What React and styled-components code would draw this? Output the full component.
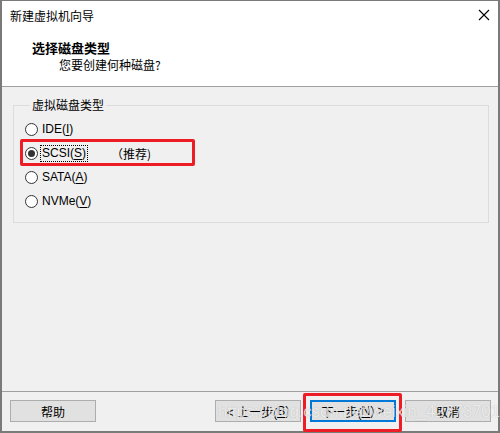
import styled, { createGlobalStyle } from 'styled-components'

const GlobalStyle = createGlobalStyle`
  html, body {
    margin: 0;
    padding: 0;
    background: #ffffff;
  }
  * {
    box-sizing: border-box;
  }
`

const fontStack = `"Liberation Sans", "Noto Sans CJK SC", sans-serif`

const Window = styled.div`
  position: relative;
  width: 500px;
  height: 433px;
  border: 2px solid #7a7a7a;
  border-top: 1px solid #7a7a7a;
  display: flex;
  flex-direction: column;
  font-family: ${fontStack};
  font-size: 12px;
  color: #000;
  background: #f0f0f0;
`

const TitleBar = styled.div`
  height: 29px;
  background: #fff;
  display: flex;
  align-items: center;
  justify-content: space-between;
  padding: 0 8px 0 8px;
`

const Title = styled.span`
  font-family: "Noto Sans CJK SC", sans-serif;
  font-size: 12px;
`

const Close = styled.svg`
  width: 12px;
  height: 12px;
  margin-top: -1px;
`

const Header = styled.div`
  height: 57px;
  background: #fff;
  border-bottom: 1px solid #a0a0a0;
  padding: 10px 0 0 30px;
`

const HeaderTitle = styled.div`
  font-family: "Noto Sans CJK SC", sans-serif;
  font-weight: bold;
  font-size: 13px;
  line-height: 16px;
`

const HeaderSub = styled.div`
  font-family: "Noto Sans CJK SC", sans-serif;
  font-size: 12px;
  line-height: 16px;
  margin: 1px 0 0 27px;
`

const Body = styled.div`
  flex: 1;
  padding: 10px 9px 0 11px;
`

const GroupBox = styled.fieldset`
  margin: 0;
  height: 126px;
  border: 1px solid #dcdcdc;
  padding: 5px 0 0 11px;
`

const Legend = styled.legend`
  font-family: "Noto Sans CJK SC", sans-serif;
  font-size: 12px;
  line-height: 16px;
  padding: 0 2px;
  margin-left: 5px;
`

const Options = styled.div`
  display: flex;
  flex-direction: column;
`

const Option = styled.label`
  display: flex;
  align-items: center;
  height: 23.8px;
  gap: 3px;
`

const Radio = styled.span`
  width: 13px;
  height: 13px;
  border-radius: 50%;
  border: 1px solid #333;
  background: #fff;
  display: flex;
  align-items: center;
  justify-content: center;
  &::after {
    content: '';
    width: 7px;
    height: 7px;
    border-radius: 50%;
    background: ${p => (p.$checked ? '#333' : 'transparent')};
  }
`

const OptionText = styled.span`
  padding: 0 1px;
  line-height: 15px;
  outline: ${p => (p.$focus ? '1px dotted #000' : 'none')};
`

const Key = styled.u`
  text-underline-offset: 2px;
`

const Hint = styled.span`
  font-family: "Noto Sans CJK SC", sans-serif;
  margin-left: 21px;
`

const Footer = styled.div`
  height: 40px;
  border-top: 1px solid #a0a0a0;
  display: flex;
  align-items: flex-start;
  padding: 8px 7px 0 8px;
`

const Button = styled.div`
  width: 86px;
  height: 22px;
  background: #e1e1e1;
  border: ${p => (p.$default ? '2px solid #0078d7' : '1px solid #adadad')};
  display: flex;
  align-items: center;
  justify-content: center;
  font-family: ${fontStack};
  font-size: 12px;
  margin-left: ${p => p.$gap || 0}px;
`

const Mark = styled.div`
  position: absolute;
  border: 3px solid #ee1c25;
  border-radius: 2px;
  left: ${p => p.$x}px;
  top: ${p => p.$y}px;
  width: ${p => p.$w}px;
  height: ${p => p.$h}px;
`

const Watermark = styled.div`
  position: absolute;
  left: 216px;
  top: 401px;
  font-family: "Liberation Sans", sans-serif;
  font-size: 17px;
  color: rgba(255, 255, 255, 0.75);
  text-shadow: 0 0 1px rgba(0, 0, 0, 0.25);
  letter-spacing: -0.2px;
  white-space: nowrap;
  pointer-events: none;
`

const options = [
  { label: 'IDE(', key: 'I', end: ')' },
  { label: 'SCSI(', key: 'S', end: ')', checked: true, hint: '（推荐)' },
  { label: 'SATA(', key: 'A', end: ')' },
  { label: 'NVMe(', key: 'V', end: ')' },
]

export default function App() {
  return (
    <>
      <GlobalStyle />
      <Window>
        <TitleBar>
          <Title>新建虚拟机向导</Title>
          <Close viewBox="0 0 12 12">
            <path d="M1 1 L11 11 M11 1 L1 11" stroke="#000" strokeWidth="1.1" fill="none" />
          </Close>
        </TitleBar>
        <Header>
          <HeaderTitle>选择磁盘类型</HeaderTitle>
          <HeaderSub>您要创建何种磁盘?</HeaderSub>
        </Header>
        <Body>
          <GroupBox>
            <Legend>虚拟磁盘类型</Legend>
            <Options>
              {options.map(o => (
                <Option key={o.key}>
                  <Radio $checked={o.checked} />
                  <OptionText $focus={o.checked}>
                    {o.label}<Key>{o.key}</Key>{o.end}
                  </OptionText>
                  {o.hint && <Hint>{o.hint}</Hint>}
                </Option>
              ))}
            </Options>
          </GroupBox>
        </Body>
        <Footer>
          <Button>帮助</Button>
          <Button $gap={119}>&lt; 上一步(<Key>B</Key>)</Button>
          <Button $gap={9} $default>下一步(<Key>N</Key>) &gt;</Button>
          <Button $gap={9}>取消</Button>
        </Footer>
        <Mark $x={18} $y={138} $w={175} $h={27} />
        <Mark $x={301} $y={392} $w={99} $h={39} />
        <Watermark>https://blog.csdn.net/weixin_42773701</Watermark>
      </Window>
    </>
  )
}
